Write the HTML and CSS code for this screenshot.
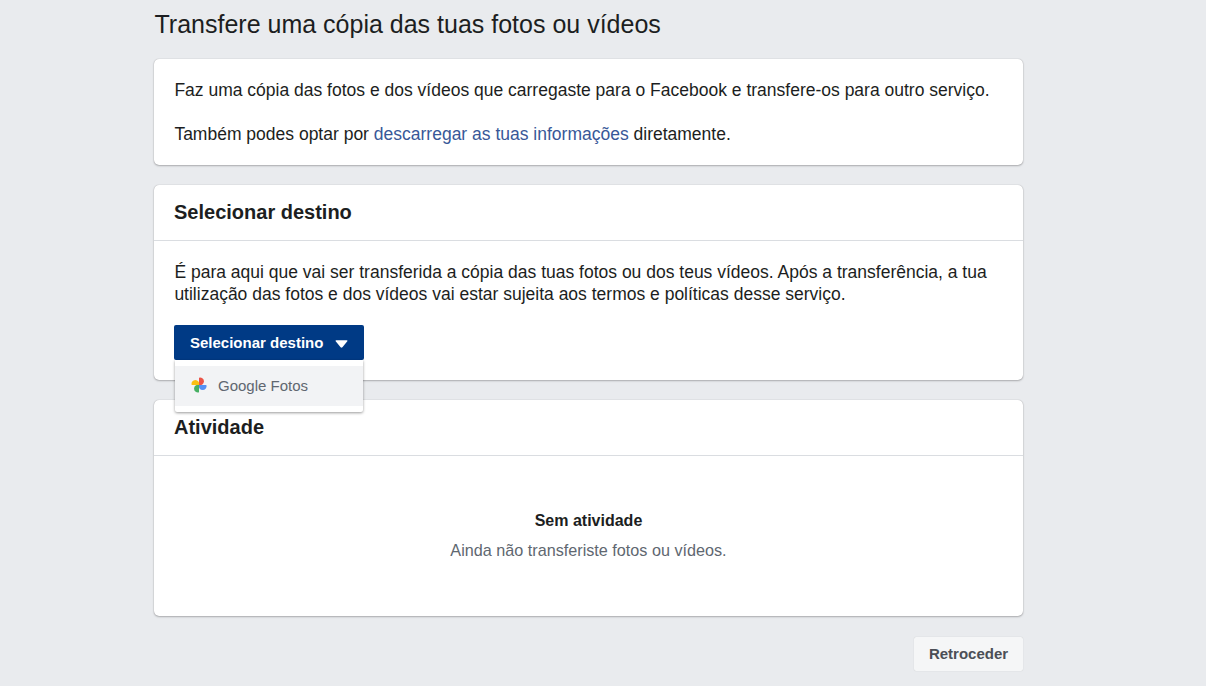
FILE: index.html
```html
<!DOCTYPE html>
<html lang="pt">
<head>
<meta charset="utf-8">
<title>Transfere uma cópia</title>
<link rel="stylesheet" href="styles.css">
</head>
<body>
<main class="page">
  <h1 class="title">Transfere uma cópia das tuas fotos ou vídeos</h1>
  <section class="card intro">
    <p class="text">Faz uma cópia das fotos e dos vídeos que carregaste para o Facebook e transfere-os para outro serviço.</p>
    <p class="text">Também podes optar por <a class="link" href="#">descarregar as tuas informações</a> diretamente.</p>
  </section>
  <section class="card dest">
    <h2 class="card-head">Selecionar destino</h2>
    <div class="card-body">
      <p class="text">É para aqui que vai ser transferida a cópia das tuas fotos ou dos teus vídeos. Após a transferência, a tua utilização das fotos e dos vídeos vai estar sujeita aos termos e políticas desse serviço.</p>
      <div class="select">
        <button class="select-btn" type="button">Selecionar destino<svg class="caret" viewBox="0 0 13 8" width="13" height="8" aria-hidden="true"><path d="M1.2 0.2 H11.8 Q13 0.2 12.3 1.3 L7.4 7.3 Q6.5 8.2 5.6 7.3 L0.7 1.3 Q0 0.2 1.2 0.2Z" fill="#fff"/></svg></button>
        <div class="menu">
          <div class="menu-item">
            <svg class="pin" viewBox="0 0 16 16" width="18" height="18" aria-hidden="true">
              <path d="M8 8 V1.5 A3.4 3.4 0 1 1 8 8Z" fill="#ea4335" opacity=".9"/>
              <path d="M8 8 H14.5 A3.4 3.4 0 1 1 8 8Z" fill="#4285f4" opacity=".9"/>
              <path d="M8 8 V14.5 A3.4 3.4 0 1 1 8 8Z" fill="#34a853" opacity=".9"/>
              <path d="M8 8 H1.5 A3.4 3.4 0 1 1 8 8Z" fill="#fbbc05" opacity=".95"/>
            </svg>
            <span>Google Fotos</span>
          </div>
        </div>
      </div>
    </div>
  </section>
  <section class="card activity">
    <h2 class="card-head">Atividade</h2>
    <div class="empty">
      <div class="empty-title">Sem atividade</div>
      <div class="empty-sub">Ainda não transferiste fotos ou vídeos.</div>
    </div>
  </section>
  <div class="actions"><button class="back" type="button">Retroceder</button></div>
</main>
</body>
</html>
```
FILE: styles.css
```css
* { box-sizing: border-box; }
html, body { margin: 0; height: 686px; overflow: hidden; }
body { background: #e9ebee; font-family: "Liberation Sans", Arial, sans-serif; color: #1c1e21; }
.page { width: 869px; margin-left: 154px; }
.title { margin: 0; height: 59px; padding: 9px 0 0 .5px; font-size: 25px; line-height: 30px; font-weight: 400; }
.card { background: #fff; border-radius: 5px; box-shadow: 0 0 1px rgba(0,0,0,.3), 0 1px 2px rgba(0,0,0,.25); margin-bottom: 20px; }
.intro { height: 106px; padding: 20px; display: flex; flex-direction: column; gap: 22px; }
.text { margin: 0; padding-left: .4px; font-size: 17.5px; line-height: 22px; }
.link { color: #385898; text-decoration: none; }
.dest { height: 195px; }
.card-head { margin: 0; height: 56px; padding: 0 20px; font-size: 20px; line-height: 55px; font-weight: 700; border-bottom: 1px solid #dadde1; }
.card-body { padding: 20px; }
.select { position: relative; margin-top: 20px; width: 190px; }
.select-btn { display: flex; align-items: center; width: 190px; height: 35px; padding: 0 0 0 16px; border: 0; border-radius: 2px; background: #003a85; color: #fff; font: 700 15px "Liberation Sans", Arial, sans-serif; }
.caret { margin-left: 12px; margin-top: 2px; }
.menu { position: absolute; z-index: 2; top: 35px; left: 1px; width: 188px; height: 52px; padding: 6px 0; background: #fff; border-radius: 0 0 2px 2px; box-shadow: 0 1px 3px rgba(0,0,0,.4); }
.menu-item { display: flex; align-items: center; gap: 10px; height: 40px; padding: 0 0 2px 15px; background: #f2f3f5; color: #606770; font-size: 15px; }
.pin { filter: blur(.4px); }
.activity { height: 216px; }
.empty { text-align: center; padding-top: 56px; }
.empty-title { font-size: 16px; line-height: 18px; font-weight: 700; color: #1c1e21; }
.empty-sub { margin-top: 10px; font-size: 16.2px; line-height: 20px; color: #606770; }
.actions { display: flex; justify-content: flex-end; padding-top: 1px; }
.back { width: 109px; height: 34px; padding: 0 0 2px; border: 0; border-radius: 2px; background: #f5f6f7; box-shadow: 0 0 1px rgba(0,0,0,.2); color: #4b4f56; font: 700 15px "Liberation Sans", Arial, sans-serif; }
```
